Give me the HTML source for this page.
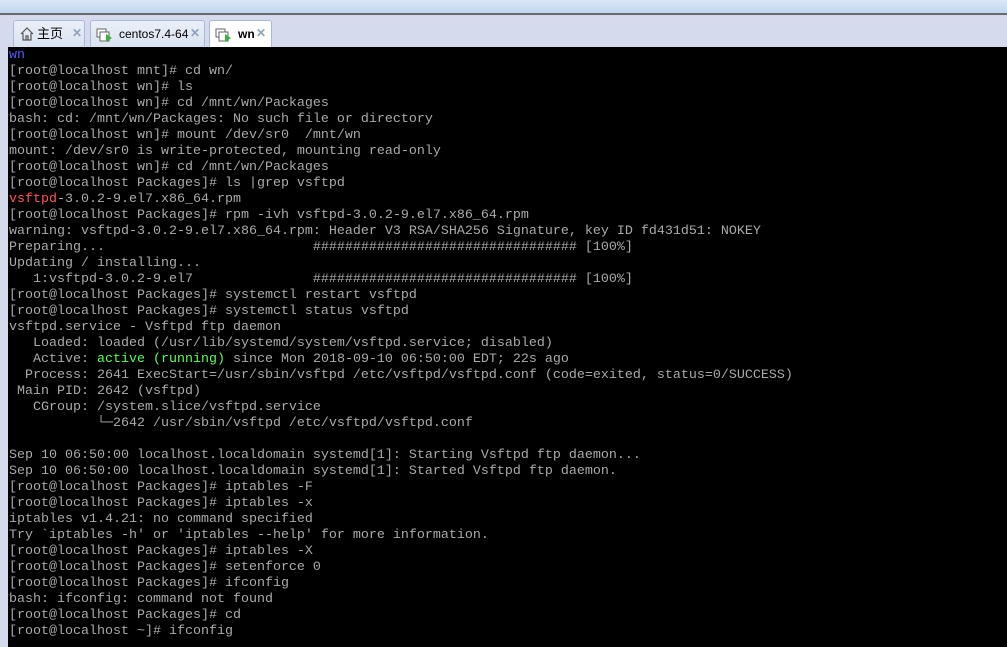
<!DOCTYPE html>
<html><head><meta charset="utf-8"><style>
html,body{margin:0;padding:0;width:1007px;height:636px;overflow:hidden;background:#d5dbec;font-family:"Liberation Sans","Noto Sans CJK SC",sans-serif}
#tb{position:absolute;left:0;top:0;width:1007px;height:13px;background:linear-gradient(#d8e6f4,#c2d8ef)}
#tl{position:absolute;left:0;top:13px;width:1007px;height:2px;background:#6a6a6a}
.tab{position:absolute;top:20px;height:27px;border:1px solid #a9bad4;border-bottom:none;border-radius:3px 3px 0 0;background:linear-gradient(#eaf0f8,#d9e3f1);box-sizing:border-box;font-size:12px;color:#000}
.tab .t{position:absolute;top:6px;line-height:14px}
.tab .x{position:absolute;top:5px;color:#8fa3bd;font-size:12px;line-height:14px;font-weight:bold}
#term{position:absolute;left:8px;top:47px;width:999px;height:600px;background:#000}
pre{margin:0;position:absolute;left:9px;top:48px;font-family:"Liberation Mono","DejaVu Sans Mono",monospace;font-size:13.33px;line-height:16px;color:#aaaaaa}
.b{color:#5858ff}.r{color:#ff5555}.g{color:#55ff55}
</style></head><body>
<div id="tb"></div><div id="tl"></div>
<div class="tab" style="left:13px;width:72px">
<svg style="position:absolute;left:5px;top:5px" width="16" height="16" viewBox="0 0 16 16"><path d="M2 8 L8 2 L14 8 M4 7 V14 H12 V7 M7 14 V10 H9 V14" fill="none" stroke="#555" stroke-width="1.2"/></svg>
<span class="t" style="left:23px;font-size:13px">主页</span><span class="x" style="left:58px">✕</span></div>
<div class="tab" style="left:90px;width:115px">
<svg style="position:absolute;left:5px;top:5px" width="18" height="18" viewBox="0 0 18 18"><rect x="1" y="3" width="9" height="8" fill="#fff" stroke="#666"/><rect x="4" y="6" width="9" height="9" fill="#fff" stroke="#666"/><path d="M10 8 L16 12 L10 16Z" fill="#3bb13b"/></svg>
<span class="t" style="left:28px">centos7.4-64</span><span class="x" style="left:99px">✕</span></div>
<div class="tab" style="left:209px;width:63px;background:#fff;height:28px">
<svg style="position:absolute;left:5px;top:5px" width="18" height="18" viewBox="0 0 18 18"><rect x="1" y="3" width="9" height="8" fill="#fff" stroke="#666"/><rect x="4" y="6" width="9" height="9" fill="#fff" stroke="#666"/><path d="M10 8 L16 12 L10 16Z" fill="#3bb13b"/></svg>
<span class="t" style="left:28px;font-weight:bold">wn</span><span class="x" style="left:46px">✕</span></div>
<div id="term"></div>
<pre><span class="b">wn</span>
[root@localhost mnt]# cd wn/
[root@localhost wn]# ls
[root@localhost wn]# cd /mnt/wn/Packages
bash: cd: /mnt/wn/Packages: No such file or directory
[root@localhost wn]# mount /dev/sr0  /mnt/wn
mount: /dev/sr0 is write-protected, mounting read-only
[root@localhost wn]# cd /mnt/wn/Packages
[root@localhost Packages]# ls |grep vsftpd
<span class="r">vsftpd</span>-3.0.2-9.el7.x86_64.rpm
[root@localhost Packages]# rpm -ivh vsftpd-3.0.2-9.el7.x86_64.rpm
warning: vsftpd-3.0.2-9.el7.x86_64.rpm: Header V3 RSA/SHA256 Signature, key ID fd431d51: NOKEY
Preparing...                          ################################# [100%]
Updating / installing...
   1:vsftpd-3.0.2-9.el7               ################################# [100%]
[root@localhost Packages]# systemctl restart vsftpd
[root@localhost Packages]# systemctl status vsftpd
vsftpd.service - Vsftpd ftp daemon
   Loaded: loaded (/usr/lib/systemd/system/vsftpd.service; disabled)
   Active: <span class="g">active (running)</span> since Mon 2018-09-10 06:50:00 EDT; 22s ago
  Process: 2641 ExecStart=/usr/sbin/vsftpd /etc/vsftpd/vsftpd.conf (code=exited, status=0/SUCCESS)
 Main PID: 2642 (vsftpd)
   CGroup: /system.slice/vsftpd.service
           └─2642 /usr/sbin/vsftpd /etc/vsftpd/vsftpd.conf

Sep 10 06:50:00 localhost.localdomain systemd[1]: Starting Vsftpd ftp daemon...
Sep 10 06:50:00 localhost.localdomain systemd[1]: Started Vsftpd ftp daemon.
[root@localhost Packages]# iptables -F
[root@localhost Packages]# iptables -x
iptables v1.4.21: no command specified
Try `iptables -h' or 'iptables --help' for more information.
[root@localhost Packages]# iptables -X
[root@localhost Packages]# setenforce 0
[root@localhost Packages]# ifconfig
bash: ifconfig: command not found
[root@localhost Packages]# cd
[root@localhost ~]# ifconfig</pre>
</body></html>
